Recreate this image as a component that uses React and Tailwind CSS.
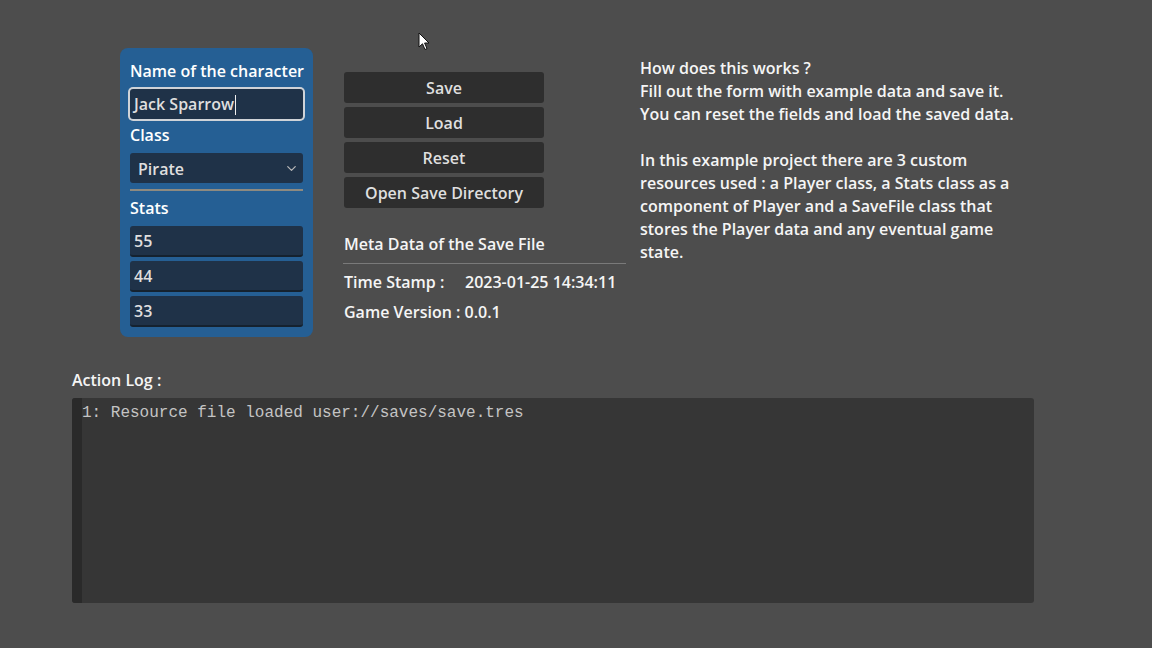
import { ChevronDown } from "lucide-react";

const font = { fontFamily: '"Open Sans", "Noto Sans", sans-serif' };

function StatInput({ value, className = "" }) {
  return (
    <div
      className={`h-[31px] rounded-[3px] bg-[#1f3248] border-b-2 border-[#15222f] flex items-center px-[4px] pt-[2px] text-[16px] text-[#dfdfdf] ${className}`}
    >
      {value}
    </div>
  );
}

function Btn({ children }) {
  return (
    <div className="h-[31px] w-[200px] rounded-[3px] bg-[#2e2e2e] flex items-center justify-center pt-[2px] text-[16px] text-[#dfdfdf]">
      {children}
    </div>
  );
}

function Cursor() {
  return (
    <svg
      className="absolute left-[418px] top-[32px] pointer-events-none"
      width="14"
      height="20"
      viewBox="0 0 14 20"
    >
      <path
        d="M1 1 L1 15 L4.5 11.8 L7 17.5 L9 16.6 L6.6 11 L11 11 Z"
        fill="#ffffff"
        stroke="#111111"
        strokeWidth="1"
        strokeLinejoin="round"
      />
    </svg>
  );
}

export default function App() {
  return (
    <div
      className="relative w-[1152px] h-[648px] bg-[#4d4d4d] font-semibold leading-[23px] text-white overflow-hidden whitespace-nowrap"
      style={font}
    >
      <Cursor />

      <div className="flex pl-[120px] pt-[48px]">
        {/* character form */}
        <div className="w-[193px] rounded-[8px] bg-[#255f94] px-[10px] pt-[12px] pb-[10px] flex flex-col">
          <div className="h-[23px] text-[16px]">Name of the character</div>
          <div className="mt-[6px] h-[30px] rounded-[3px] bg-[#1f3248] ring-2 ring-[#cfd3d8] flex items-center px-[4px] pt-[1px] text-[16px] text-[#dfdfdf]">
            Jack Sparrow
            <span className="inline-block w-px h-[20px] bg-[#f0f0f0] ml-px" />
          </div>
          <div className="mt-[5px] h-[23px] text-[16px]">Class</div>
          <div className="mt-[6px] h-[30px] rounded-[3px] bg-[#1f3248] flex items-center justify-between pl-[8px] pr-[4px] pt-[2px] text-[16px] text-[#dfdfdf]">
            <span>Pirate</span>
            <ChevronDown size={15} strokeWidth={2} className="text-[#b8b8b8] -mt-[2px]" />
          </div>
          <div className="mt-[6px] h-[2px] bg-[#8e8a80]" />
          <div className="mt-[6px] h-[23px] text-[16px]">Stats</div>
          <StatInput value="55" className="mt-[6px]" />
          <StatInput value="44" className="mt-[4px]" />
          <StatInput value="33" className="mt-[4px]" />
        </div>

        {/* actions + meta */}
        <div className="ml-[31px] w-[282px] pt-[24px] flex flex-col">
          <div className="flex flex-col gap-[4px]">
            <Btn>Save</Btn>
            <Btn>Load</Btn>
            <Btn>Reset</Btn>
            <Btn>Open Save Directory</Btn>
          </div>
          <div className="mt-[25px] h-[23px] text-[16px] text-[#f5f5f5]">
            Meta Data of the Save File
          </div>
          <div className="mt-[7px] -ml-px h-px bg-[#7a7a7a]" />
          <div className="mt-[7px] h-[23px] flex text-[16px] text-[#f5f5f5]">
            <span className="w-[121px]">Time Stamp :</span>
            <span>2023-01-25 14:34:11</span>
          </div>
          <div className="mt-[7px] h-[23px] text-[16px] text-[#f5f5f5]">
            Game Version : 0.0.1
          </div>
        </div>

        {/* help text */}
        <div className="ml-[14px] pt-[9px] text-[16px] text-[#f5f5f5]">
          <div>How does this works ?</div>
          <div>Fill out the form with example data and save it.</div>
          <div>You can reset the fields and load the saved data.</div>
          <div className="h-[23px]" />
          <div>In this example project there are 3 custom</div>
          <div>resources used : a Player class, a Stats class as a</div>
          <div>component of Player and a SaveFile class that</div>
          <div>stores the Player data and any eventual game</div>
          <div>state.</div>
        </div>
      </div>

      {/* action log */}
      <div className="pl-[72px] mt-[32px]">
        <div className="h-[23px] text-[16px] text-[#f5f5f5]">Action Log :</div>
        <div className="mt-[6px] w-[962px] h-[205px] rounded-[3px] bg-[#363636] flex overflow-hidden">
          <div className="w-[10px] bg-[#2a2a2a]" />
          <div
            className="pt-[5px] text-[16px] font-normal leading-[20px] text-[#c4c4c4]"
            style={{ fontFamily: '"Liberation Mono", "Courier New", monospace' }}
          >
            1: Resource file loaded user://saves/save.tres
          </div>
        </div>
      </div>
    </div>
  );
}
